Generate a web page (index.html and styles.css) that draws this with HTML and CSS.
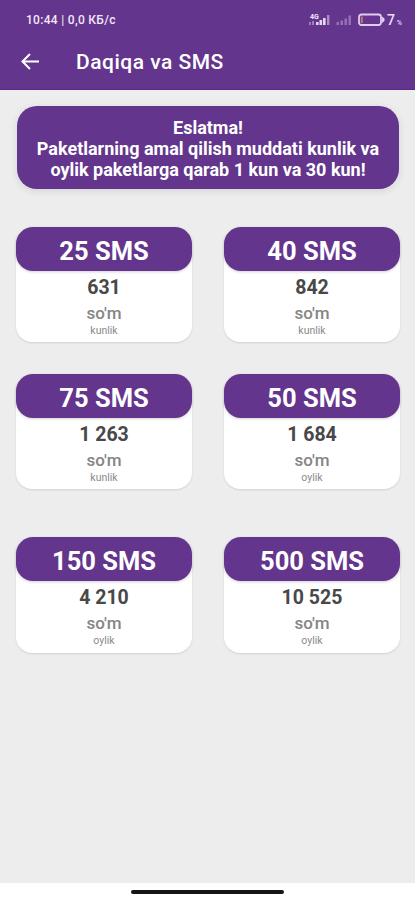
FILE: index.html
```html
<!DOCTYPE html>
<html lang="uz">

<head>
    <meta charset="UTF-8">
    <meta name="viewport" content="width=device-width, initial-scale=1.0">
    <title>Daqiqa va SMS</title>
    <link rel="stylesheet" href="styles.css">
</head>

<body>
    <!-- Header -->
    <header class="header">
        <div class="status-bar">
            <span class="status-time">10:44 | 0,0 КБ/с</span>
            <div class="status-icons">
                <svg class="signal" width="49" height="16" viewBox="0 0 49 16">
                    <text x="1" y="6.5" class="network">4G</text>
                    <g fill="#e4d8f0">
                        <rect x="0" y="10" width="2" height="3" opacity="0.45" />
                        <rect x="3" y="9" width="2" height="4" opacity="0.45" />
                        <rect x="7" y="10" width="2.6" height="3" />
                        <rect x="10.5" y="8" width="2.6" height="5" />
                        <rect x="14" y="6" width="2.6" height="7" />
                        <rect x="18" y="3" width="2.4" height="10" opacity="0.55" />
                    </g>
                    <g fill="#a586c4" opacity="0.75">
                        <rect x="27.5" y="10" width="2.5" height="3" />
                        <rect x="31.5" y="8.5" width="2.5" height="4.5" />
                        <rect x="35.5" y="6.5" width="2.5" height="6.5" />
                        <rect x="39.5" y="3.5" width="2.5" height="9.5" />
                    </g>
                </svg>
                <svg class="battery" width="28" height="14" viewBox="0 0 28 14">
                    <rect x="1" y="1.5" width="22" height="10.5" rx="2.5" fill="none" stroke="#e0cdf3" stroke-width="1.8" />
                    <path d="M24 3.5L26.5 5.5V8L24 10Z" fill="#e0cdf3" />
                    <rect x="2.8" y="3.5" width="2" height="6.5" fill="#c07870" />
                </svg>
                <span class="percent">7<small>%</small></span>
            </div>
        </div>
        <div class="toolbar">
            <svg class="back" width="20" height="18" viewBox="0 0 20 18">
                <path d="M19 8.5H2.8M10 1L2.5 8.5L10 16" fill="none" stroke="#fff" stroke-width="2" />
            </svg>
            <h1>Daqiqa va SMS</h1>
        </div>
    </header>

    <!-- Main Content -->
    <main class="content">
        <div class="notice">
            Eslatma!<br>
            Paketlarning amal qilish muddati kunlik va<br>
            oylik paketlarga qarab 1 kun va 30 kun!
        </div>

        <div class="packages">
            <div class="card">
                <h2>25 SMS</h2>
                <div class="price">631</div>
                <div class="currency">so'm</div>
                <div class="period">kunlik</div>
            </div>
            <div class="card">
                <h2>40 SMS</h2>
                <div class="price">842</div>
                <div class="currency">so'm</div>
                <div class="period">kunlik</div>
            </div>
            <div class="card">
                <h2>75 SMS</h2>
                <div class="price">1 263</div>
                <div class="currency">so'm</div>
                <div class="period">kunlik</div>
            </div>
            <div class="card">
                <h2>50 SMS</h2>
                <div class="price">1 684</div>
                <div class="currency">so'm</div>
                <div class="period">oylik</div>
            </div>
        </div>

        <div class="packages monthly">
            <div class="card">
                <h2>150 SMS</h2>
                <div class="price">4 210</div>
                <div class="currency">so'm</div>
                <div class="period">oylik</div>
            </div>
            <div class="card">
                <h2>500 SMS</h2>
                <div class="price">10 525</div>
                <div class="currency">so'm</div>
                <div class="period">oylik</div>
            </div>
        </div>
    </main>

    <!-- Gesture bar -->
    <footer class="nav-bar">
        <div class="handle"></div>
    </footer>
</body>

</html>
```
FILE: styles.css
```css
* {
    box-sizing: border-box;
}

body {
    font-family: Roboto, sans-serif;
    background: #ededed;
    margin: 0;
    height: 900px;
    display: flex;
    flex-direction: column;
    overflow: hidden;
}

.header {
    background: #63358d;
    color: white;
    height: 90px;
    flex-shrink: 0;
    border-bottom: 1px solid #592888;
}

.status-bar {
    height: 40px;
    padding: 0 13px 0 26px;
    display: flex;
    align-items: center;
    justify-content: space-between;
}

.status-time {
    font-size: 12px;
    font-weight: 500;
    letter-spacing: 0.3px;
    color: #f0e8f7;
}

.status-icons {
    display: flex;
    align-items: center;
}

.network {
    font-size: 7px;
    font-weight: 700;
    fill: #f0e8f7;
}

.battery {
    margin-right: 1px;
}

.percent {
    font-size: 14px;
    font-weight: 500;
    color: #eadff4;
}

.percent small {
    font-size: 7px;
    margin-left: 2px;
}

.toolbar {
    height: 44px;
    padding-left: 20px;
    display: flex;
    align-items: center;
}

.toolbar h1 {
    margin: 0 0 0 36px;
    font-size: 21px;
    font-weight: 500;
    letter-spacing: 0.5px;
}

.content {
    flex: 1;
    padding: 16px 15px 0 16px;
}

.notice {
    height: 83px;
    margin: 0 1px;
    padding-top: 11px;
    background: #63358d;
    color: white;
    border-radius: 20px;
    box-shadow: 0 2px 8px rgba(0, 0, 0, 0.1);
    font-size: 18px;
    font-weight: 700;
    line-height: 21px;
    text-align: center;
    white-space: nowrap;
}

.packages {
    margin-top: 38px;
    display: grid;
    grid-template-columns: 1fr 1fr;
    gap: 32px;
}

.packages.monthly {
    margin-top: 48px;
}

.card {
    height: 115px;
    background: white;
    border-radius: 16px;
    box-shadow: 0 1px 2px rgba(0, 0, 0, 0.12);
    text-align: center;
}

.monthly .card {
    height: 116px;
}

.card h2 {
    height: 44px;
    margin: 0;
    background: #63358d;
    color: white;
    border-radius: 17px;
    box-shadow: 0 1px 3px rgba(0, 0, 0, 0.18);
    font-size: 25.5px;
    font-weight: 700;
    line-height: 48px;
}

.price {
    margin-top: 4px;
    color: #484848;
    font-size: 19.5px;
    font-weight: 700;
    line-height: 26px;
}

.currency {
    color: #858585;
    font-size: 17px;
    font-weight: 500;
    line-height: 24px;
}

.period {
    color: #8a8a8a;
    font-size: 10.5px;
    line-height: 12px;
}

.nav-bar {
    height: 17px;
    flex-shrink: 0;
    background: white;
    display: flex;
    justify-content: center;
    padding-top: 7px;
}

.handle {
    width: 153px;
    height: 4px;
    background: #151515;
    border-radius: 2px;
}
```
